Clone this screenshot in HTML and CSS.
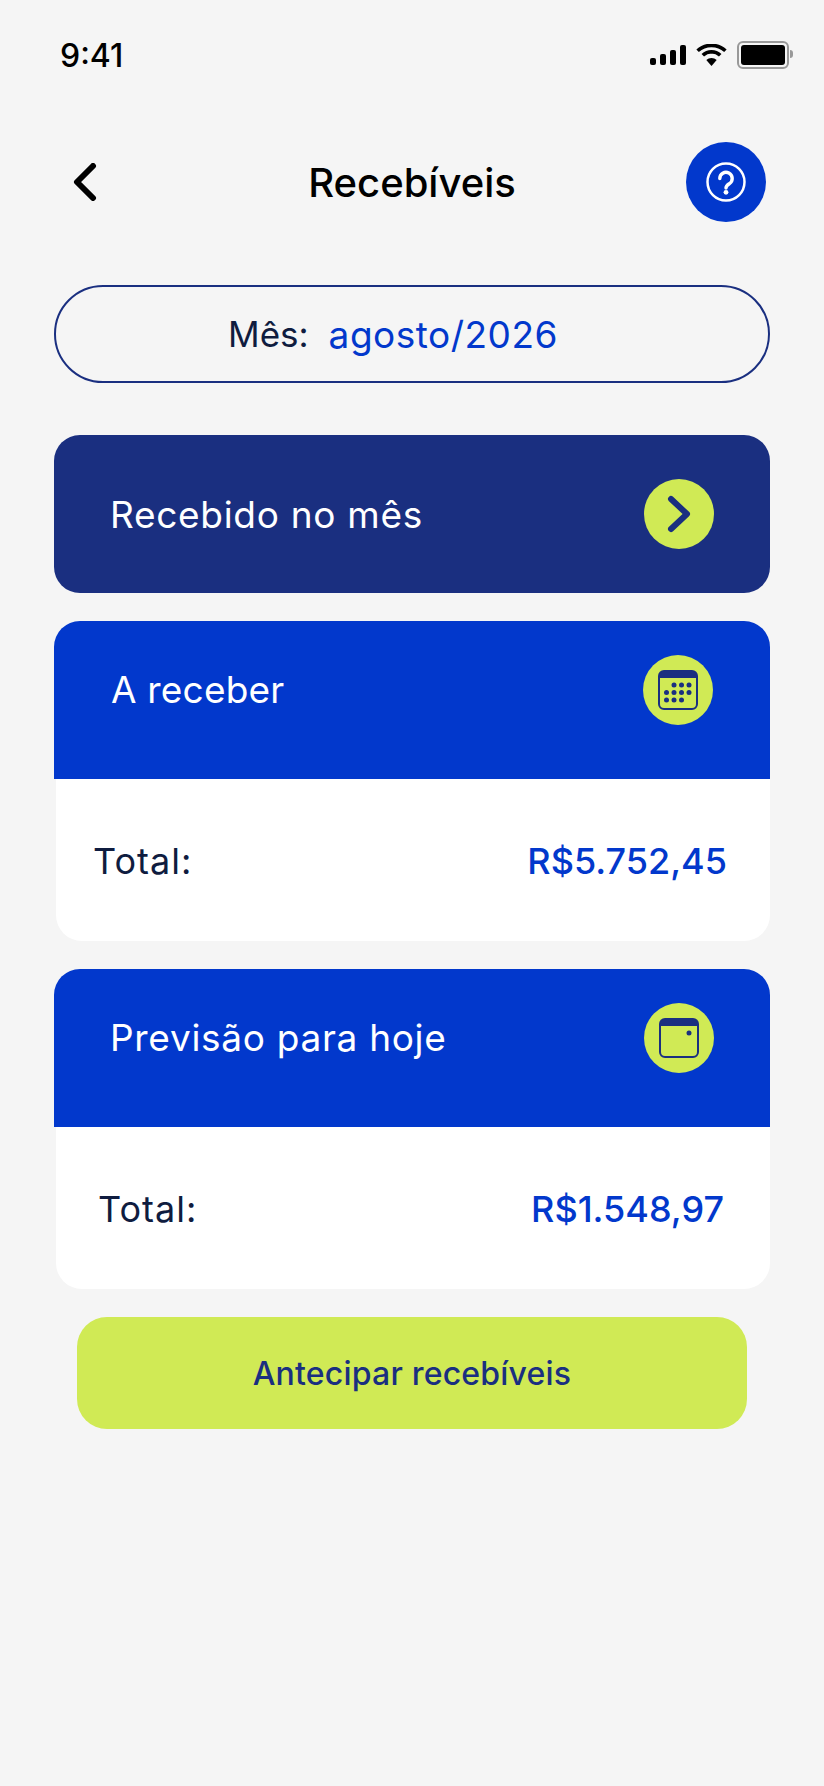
FILE: index.html
```html
<!DOCTYPE html>
<html lang="pt-BR">
<head>
<meta charset="UTF-8" />
<meta name="viewport" content="width=device-width, initial-scale=1" />
<title>Recebíveis</title>
<link rel="stylesheet" href="styles.css">
</head>
<body>

<div class="statusBar">
  <span class="time">9:41</span>
  <div class="statusIcons">
    <svg class="signal" width="36" height="20" viewBox="0 0 36 20">
      <rect x="0" y="13" width="6" height="7" rx="2" />
      <rect x="10" y="9" width="6" height="11" rx="2" />
      <rect x="20" y="5" width="6" height="15" rx="2" />
      <rect x="30" y="0" width="6" height="20" rx="2" />
    </svg>
    <svg class="wifi" width="31" height="22" viewBox="0 0 31 22">
      <path d="M15.5 22l-5.2-6a7.6 7.6 0 0 1 10.4 0z" />
      <path d="M15.5 7.800a12.600 12.600 0 0 1 8.700 3.500M15.500 7.800a12.600 12.600 0 0 0-8.700 3.500" fill="none" stroke="#000" stroke-width="3.600" />
      <path d="M1.600 6.800a20.500 20.500 0 0 1 27.800 0" fill="none" stroke="#000" stroke-width="3.600" />
    </svg>
    <div class="battery"><div class="batteryFill"></div></div>
  </div>
</div>

<div class="pageHeader">
  <svg class="backIcon" width="26" height="38" viewBox="0 0 26 38">
    <path d="M21 3L5 19l16 16" fill="none" stroke="#000" stroke-width="6" stroke-linecap="round" stroke-linejoin="round" />
  </svg>
  <h1 class="pageTitle">Recebíveis</h1>
  <div class="helpButton">
    <svg width="42" height="42" viewBox="0 0 42 42">
      <circle cx="21" cy="21" r="18.500" fill="none" stroke="#fff" stroke-width="2.500" />
      <path d="M14.800 17.500a6.200 6.200 0 1 1 9.700 5.100c-2.200 1.500-3.500 2.300-3.500 4.400" fill="none" stroke="#fff" stroke-width="3.400" stroke-linecap="round" />
      <circle cx="21" cy="31.300" r="2.400" fill="#fff" />
    </svg>
  </div>
</div>

<div class="monthPicker">
  <span class="monthLabel">Mês:</span>
  <span class="monthValue">agosto/2026</span>
</div>

<div class="cardList">
  <div class="summaryBar">
    <span class="cardTitle">Recebido no mês</span>
    <div class="iconCircle">
      <svg width="26" height="38" viewBox="0 0 26 38">
        <path d="M5 4l16 15L5 34" fill="none" stroke="#1a2f80" stroke-width="6" stroke-linecap="round" stroke-linejoin="round" />
      </svg>
    </div>
  </div>

  <div class="card">
    <div class="cardHeader">
      <span class="cardTitle titleReceber">A receber</span>
      <div class="iconCircle">
        <svg width="40" height="40" viewBox="0 0 40 40">
          <rect x="1" y="1" width="38" height="38" rx="5" fill="none" stroke="#1a2f80" stroke-width="2" />
          <path d="M1 8V6a5 5 0 0 1 5-5h28a5 5 0 0 1 5 5v2z" fill="#1a2f80" />
          <g fill="#1a2f80">
            <circle cx="16" cy="15" r="2.500" /><circle cx="23.500" cy="15" r="2.500" /><circle cx="31" cy="15" r="2.500" />
            <circle cx="8.500" cy="22.500" r="2.500" /><circle cx="16" cy="22.500" r="2.500" /><circle cx="23.500" cy="22.500" r="2.500" /><circle cx="31" cy="22.500" r="2.500" />
            <circle cx="8.500" cy="30" r="2.500" /><circle cx="16" cy="30" r="2.500" /><circle cx="23.500" cy="30" r="2.500" />
          </g>
        </svg>
      </div>
    </div>
    <div class="cardBody bodyReceber">
      <span class="totalLabel">Total:</span>
      <span class="totalValue">R$5.752,45</span>
    </div>
  </div>

  <div class="card">
    <div class="cardHeader headerHoje">
      <span class="cardTitle">Previsão para hoje</span>
      <div class="iconCircle">
        <svg width="40" height="40" viewBox="0 0 40 40">
          <rect x="1" y="1" width="38" height="38" rx="5" fill="none" stroke="#1a2f80" stroke-width="2" />
          <path d="M1 8V6a5 5 0 0 1 5-5h28a5 5 0 0 1 5 5v2z" fill="#1a2f80" />
          <circle cx="30" cy="15" r="2.500" fill="#1a2f80" />
        </svg>
      </div>
    </div>
    <div class="cardBody bodyHoje">
      <span class="totalLabel">Total:</span>
      <span class="totalValue">R$1.548,97</span>
    </div>
  </div>

  <button class="anticipateButton">Antecipar recebíveis</button>
</div>

</body>
</html>
```

FILE: styles.css
```css
body {
  margin: 0;
  padding: 0;
  background: #f5f5f5;
  font-family: "Inter", "Liberation Sans", sans-serif;
  color: #0f1c3f;
  height: 1786px;
  overflow: hidden;
}
.statusBar {
  display: flex;
  justify-content: space-between;
  align-items: center;
  height: 40px;
  padding: 35px 35px 0 60px;
}
.time {
  font-size: 32px;
  font-weight: 500;
  color: #000;
}
.statusIcons {
  display: flex;
  align-items: center;
  gap: 10px;
}
.signal {
  fill: #000;
}
.battery {
  position: relative;
  width: 44px;
  height: 20px;
  padding: 2px;
  border: 2px solid #999;
  border-radius: 6px;
}
.battery::after {
  content: "";
  position: absolute;
  right: -6px;
  top: 7px;
  width: 3px;
  height: 8px;
  background: #999;
  border-radius: 0 3px 3px 0;
}
.batteryFill {
  width: 100%;
  height: 100%;
  background: #000;
  border-radius: 3px;
}
.pageHeader {
  position: relative;
  display: flex;
  justify-content: space-between;
  align-items: center;
  height: 80px;
  margin-top: 67px;
  padding: 0 58px 0 72px;
}
.pageTitle {
  position: absolute;
  left: 0;
  right: 0;
  margin: 0;
  text-align: center;
  font-size: 40px;
  font-weight: 500;
  color: #000;
}
.helpButton {
  display: flex;
  align-items: center;
  justify-content: center;
  width: 80px;
  height: 80px;
  border-radius: 50%;
  background: #0238cc;
}
.monthPicker {
  display: flex;
  justify-content: center;
  align-items: center;
  gap: 20px;
  height: 94px;
  margin: 63px 54px 0;
  padding-right: 38px;
  border: 2px solid #1a2f80;
  border-radius: 49px;
}
.monthLabel {
  font-size: 35px;
}
.monthValue {
  font-size: 37px;
  letter-spacing: 0.5px;
  color: #0238cc;
}
.cardList {
  display: flex;
  flex-direction: column;
  gap: 28px;
  margin: 52px 54px 0;
}
.summaryBar {
  display: flex;
  justify-content: space-between;
  align-items: center;
  height: 158px;
  padding: 0 56px;
  background: #1a2f80;
  border-radius: 26px;
}
.cardTitle {
  font-size: 37px;
  letter-spacing: 0.7px;
  color: #fff;
}
.iconCircle {
  display: flex;
  align-items: center;
  justify-content: center;
  width: 70px;
  height: 70px;
  border-radius: 50%;
  background: #d0ea55;
}
.card {
  display: flex;
  flex-direction: column;
}
.cardHeader {
  display: flex;
  justify-content: space-between;
  align-items: flex-start;
  height: 124px;
  padding: 34px 57px 0 56px;
  background: #0238cc;
  border-radius: 26px 26px 0 0;
}
.headerHoje {
  padding-right: 56px;
}
.cardHeader .cardTitle {
  line-height: 70px;
}
.titleReceber {
  margin-left: 1px;
  letter-spacing: 0.2px;
}
.cardBody {
  display: flex;
  justify-content: space-between;
  align-items: center;
  height: 160px;
  padding-top: 2px;
  margin-left: 2px;
  background: #fff;
  border-radius: 0 0 26px 26px;
}
.bodyReceber {
  padding-right: 43px;
  padding-left: 37px;
}
.bodyHoje {
  padding-right: 46px;
  padding-left: 42px;
}
.totalLabel {
  font-size: 36px;
  letter-spacing: 1px;
}
.totalValue {
  font-size: 36px;
  font-weight: 500;
  color: #0238cc;
}
.anticipateButton {
  display: block;
  height: 112px;
  margin: 0 23px;
  background: #d0ea55;
  border: none;
  border-radius: 30px;
  font-family: inherit;
  font-size: 32px;
  font-weight: 500;
  letter-spacing: 0.2px;
  color: #1a2f80;
}
```
